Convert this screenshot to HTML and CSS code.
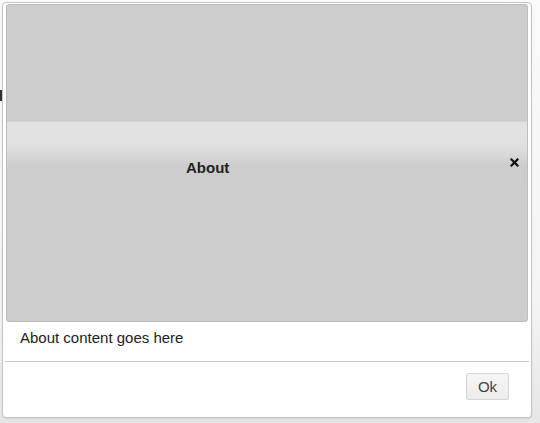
FILE: index.html
```html
<!DOCTYPE html>
<html>
<head>
<meta charset="utf-8">
<link rel="stylesheet" href="styles.css">
</head>
<body>
<span class="peek"></span>
<div class="dialog">
  <div class="panel">
    <div class="panel-top"></div>
    <div class="titlebar">
      <span class="title">About</span>
      <svg class="close" width="9" height="9" viewBox="0 0 9 9"><path d="M1.5 1.5 L7.5 7.5 M7.5 1.5 L1.5 7.5" stroke="#111" stroke-width="2.2" stroke-linecap="square"/></svg>
    </div>
  </div>
  <div class="content">About content goes here</div>
  <div class="footer">
    <button class="ok">Ok</button>
  </div>
</div>
</body>
</html>
```
FILE: styles.css
```css
html, body {
  margin: 0;
  padding: 0;
}
body {
  width: 540px;
  height: 423px;
  background: linear-gradient(#fafafa, #f4f4f4 300px, #e6e6e6);
  font-family: "Liberation Sans", Arial, sans-serif;
  position: relative;
  overflow: hidden;
}
.peek {
  position: absolute;
  left: 0;
  top: 90px;
  width: 2px;
  height: 11px;
  background: #333;
}
.dialog {
  position: relative;
  margin: 2px 0 0 2px;
  width: 528px;
  height: 414px;
  border: 1px solid #c4c4c4;
  border-radius: 4px;
  background: #fff;
  display: flex;
  flex-direction: column;
  box-shadow: 0 1px 2px rgba(0,0,0,0.08);
}
.panel {
  margin: 1px 3px 0 3px;
  height: 316px;
  border: 1px solid #bdbdbd;
  border-radius: 3px;
  background: #cccccc;
  display: flex;
  flex-direction: column;
}
.panel-top {
  height: 116px;
  border-bottom: 1px solid #d3d3d3;
}
.titlebar {
  height: 62px;
  background: linear-gradient(#e2e2e2 0px, #e1e1e1 20px, #d9d9d9 32px, #cdcdcd 44px, #cccccc 62px);
  display: flex;
  align-items: flex-start;
  position: relative;
}
.title {
  margin: 37px 0 0 179px;
  font-weight: bold;
  font-size: 15px;
  line-height: 18px;
  color: #222;
}
.close {
  position: absolute;
  left: 503px;
  top: 36px;
}
.content {
  height: 32px;
  padding: 7px 0 0 17px;
  font-size: 15px;
  line-height: 18px;
  color: #222;
}
.footer {
  margin: 0 2px;
  border-top: 1px solid #c8c8c8;
  flex: 1;
  display: flex;
  justify-content: flex-end;
  align-items: flex-start;
  padding: 11px 20px 0 0;
}
.ok {
  width: 43px;
  height: 27px;
  border: 1px solid #d6d6d6;
  border-radius: 2px;
  background: linear-gradient(#f6f6f6, #ececec);
  font-family: "Liberation Sans", Arial, sans-serif;
  font-size: 15px;
  color: #444;
  padding: 0;
}
```
